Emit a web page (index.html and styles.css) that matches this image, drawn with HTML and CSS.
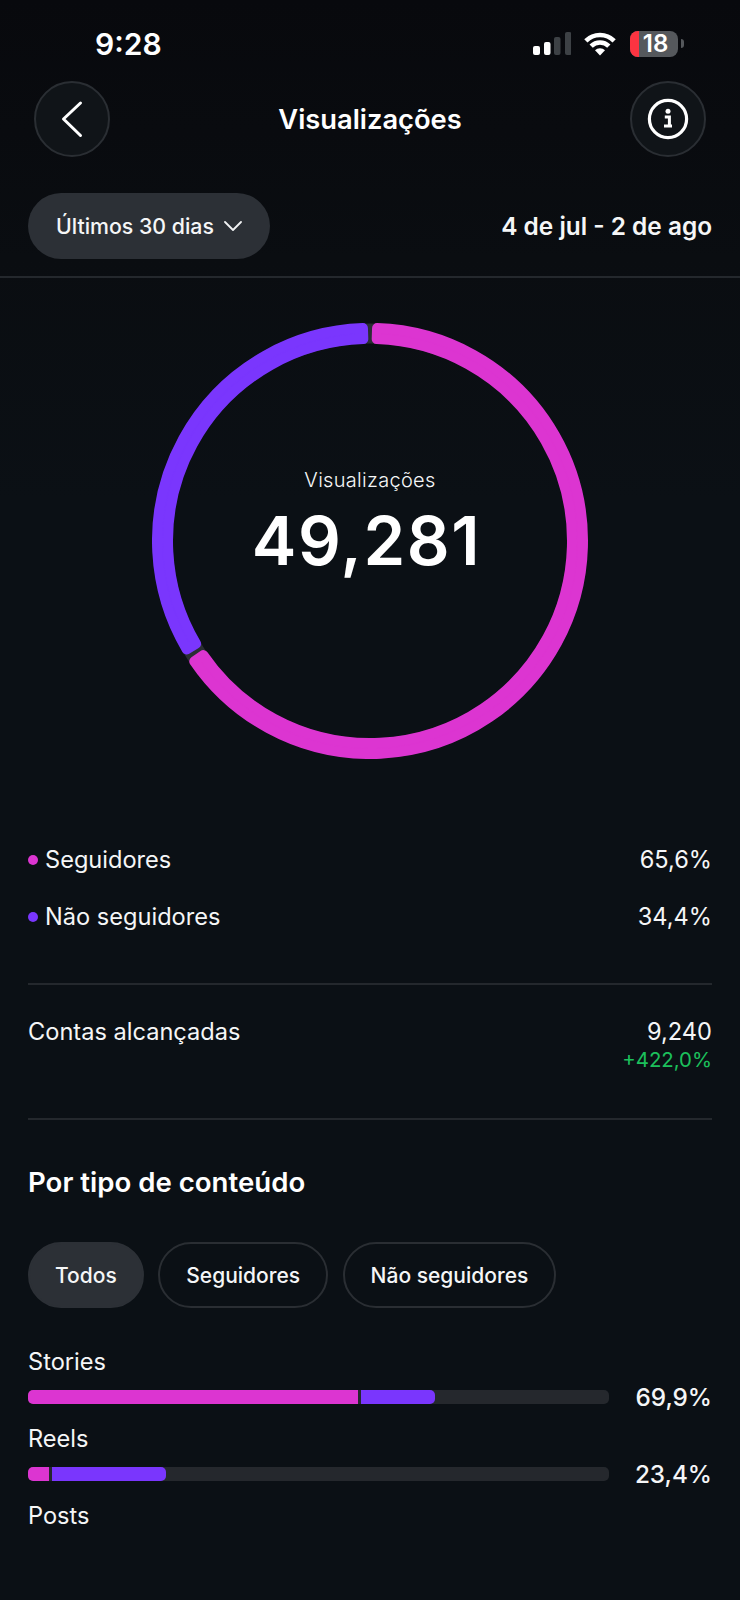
FILE: index.html
```html
<!DOCTYPE html>
<html lang="pt-BR">
<head>
    <meta charset="UTF-8">
    <meta name="viewport" content="width=device-width, initial-scale=1.0">
    <title>Visualizações</title>
    <link rel="stylesheet" href="styles.css">
</head>
<body>
<div class="screen">
    <div class="status-bar">
        <span class="clock">9:28</span>
        <div class="status-icons">
            <svg class="signal" width="38" height="23" viewBox="0 0 38 23">
                <rect x="0" y="14" width="7" height="9" rx="2" fill="#fff"/>
                <rect x="11" y="10" width="6.5" height="13" rx="2" fill="#fff"/>
                <rect x="21" y="5" width="6.5" height="18" rx="2" fill="#3d4145"/>
                <rect x="32" y="0" width="6.5" height="23" rx="2" fill="#3d4145"/>
            </svg>
            <svg class="wifi" width="34" height="24" viewBox="0 0 34 24">
                <path d="M2.86 8.86A20 20 0 0 1 31.14 8.86" fill="none" stroke="#fff" stroke-width="4.6"/>
                <path d="M8.16 14.16A12.5 12.5 0 0 1 25.84 14.16" fill="none" stroke="#fff" stroke-width="4.6"/>
                <path d="M17 23.5L12 18.3A7 7 0 0 1 22 18.3Z" fill="#fff"/>
            </svg>
            <div class="battery">
                <div class="battery-body">
                    <span class="battery-low"></span>
                    <span class="battery-level">18</span>
                </div>
                <span class="battery-nub"></span>
            </div>
        </div>
    </div>

    <div class="nav">
        <div class="round-btn">
            <svg width="24" height="38" viewBox="0 0 24 38">
                <path d="M20.5 3L3.5 19L20.5 35.5" fill="none" stroke="#fff" stroke-width="3" stroke-linecap="round" stroke-linejoin="round"/>
            </svg>
        </div>
        <h1 class="nav-title">Visualizações</h1>
        <div class="round-btn">
            <svg width="42" height="42" viewBox="0 0 42 42">
                <circle cx="21" cy="21" r="18.6" fill="none" stroke="#fff" stroke-width="3.2"/>
                <circle cx="21" cy="13.2" r="2.5" fill="#fff"/>
                <path d="M17.8 19H22.4V28H25M17 28H25" fill="none" stroke="#fff" stroke-width="3"/>
            </svg>
        </div>
    </div>

    <div class="toolbar">
        <div class="range-pill">
            <span>Últimos 30 dias</span>
            <svg width="18" height="10" viewBox="0 0 18 10">
                <path d="M1 1L9 9L17 1" fill="none" stroke="#f1f2f3" stroke-width="1.8" stroke-linecap="round" stroke-linejoin="round"/>
            </svg>
        </div>
        <span class="date-range">4 de jul - 2 de ago</span>
    </div>
    <div class="full-rule"></div>

    <div class="donut">
        <svg width="436" height="436" viewBox="0 0 436 436">
            <circle cx="218" cy="218" r="207.5" fill="none" stroke="#2a2e33" stroke-width="20"/>
            <path class="slice-pink" d="M225.06 5.12A213 213 0 1 1 42.25 338.35L51.33 332.13A202 202 0 1 0 224.70 16.11Z"/>
            <path class="slice-purple" d="M34.67 326.42A213 213 0 0 1 210.94 5.12L211.30 16.11A202 202 0 0 0 44.14 320.82Z"/>
        </svg>
        <div class="donut-center">
            <span class="donut-label">Visualizações</span>
            <span class="donut-value">49,281</span>
        </div>
    </div>

    <div class="legend">
        <div class="row">
            <span class="legend-name"><i class="dot dot-pink"></i>Seguidores</span>
            <span>65,6%</span>
        </div>
        <div class="row">
            <span class="legend-name"><i class="dot dot-purple"></i>Não seguidores</span>
            <span>34,4%</span>
        </div>
    </div>

    <div class="rule rule-first"></div>

    <div class="reach">
        <span>Contas alcançadas</span>
        <div class="reach-values">
            <span>9,240</span>
            <span class="growth">+422,0%</span>
        </div>
    </div>

    <div class="rule rule-second"></div>

    <h2 class="section-title">Por tipo de conteúdo</h2>

    <div class="chips">
        <span class="chip chip-active">Todos</span>
        <span class="chip">Seguidores</span>
        <span class="chip">Não seguidores</span>
    </div>

    <div class="types">
        <div class="type">
            <div class="type-name">Stories</div>
            <div class="type-row">
                <div class="bar">
                    <span class="bar-pink" style="width: 330px"></span>
                    <span class="bar-purple" style="width: 74px"></span>
                </div>
                <span class="type-value">69,9%</span>
            </div>
        </div>
        <div class="type">
            <div class="type-name">Reels</div>
            <div class="type-row">
                <div class="bar">
                    <span class="bar-pink" style="width: 21px"></span>
                    <span class="bar-purple" style="width: 114px"></span>
                </div>
                <span class="type-value">23,4%</span>
            </div>
        </div>
        <div class="type">
            <div class="type-name">Posts</div>
        </div>
    </div>
</div>
</body>
</html>
```

FILE: styles.css
```css
* {
    box-sizing: border-box;
    margin: 0;
    padding: 0;
}

body {
    font-family: 'Inter', sans-serif;
    background-color: #0b1015;
    color: #f5f6f7;
}

.screen {
    width: 740px;
    height: 1600px;
    overflow: hidden;
    background: linear-gradient(#08090d 0, #0a0d11 260px, #0b1015 500px);
}

/* status bar */
.status-bar {
    height: 81px;
    padding: 6px 56px 0 95px;
    display: flex;
    align-items: center;
    justify-content: space-between;
}

.clock {
    font-size: 30px;
    font-weight: 600;
    color: #fff;
}

.status-icons {
    display: flex;
    align-items: center;
}

.signal {
    margin-right: 12px;
}

.wifi {
    margin-right: 13px;
}

.battery {
    display: flex;
    align-items: center;
    gap: 3px;
}

.battery-body {
    position: relative;
    width: 48px;
    height: 26px;
    border-radius: 8px;
    overflow: hidden;
    background-color: #55585c;
    display: flex;
    align-items: center;
    justify-content: center;
}

.battery-low {
    position: absolute;
    left: 0;
    top: 0;
    bottom: 0;
    width: 9px;
    background-color: #fc3441;
}

.battery-level {
    position: relative;
    padding-left: 3px;
    font-size: 24px;
    font-weight: 600;
    color: #fff;
}

.battery-nub {
    width: 3px;
    height: 9px;
    border-radius: 0 3px 3px 0;
    background-color: #55585c;
}

/* header */
.nav {
    height: 75px;
    padding: 0 34px;
    display: flex;
    align-items: center;
    justify-content: space-between;
}

.round-btn {
    width: 76px;
    height: 76px;
    border-radius: 50%;
    border: 2px solid #2a2e33;
    background-color: #101418;
    display: flex;
    align-items: center;
    justify-content: center;
}

.nav-title {
    padding-top: 2px;
    font-size: 27.3px;
    font-weight: 600;
    color: #fff;
}

.toolbar {
    margin-top: 37px;
    padding: 0 28px;
    display: flex;
    align-items: center;
    justify-content: space-between;
}

.range-pill {
    height: 66px;
    width: 242px;
    padding-left: 28px;
    border-radius: 33px;
    background-color: #2c3036;
    display: flex;
    align-items: center;
    gap: 10px;
    font-size: 21.3px;
    font-weight: 500;
}

.date-range {
    font-size: 24.4px;
    font-weight: 600;
}

.full-rule {
    height: 2px;
    margin-top: 17px;
    background-color: #24282d;
}

/* donut */
.donut {
    margin-top: 45px;
    height: 436px;
    display: grid;
    justify-items: center;
    align-items: center;
}

.donut svg,
.donut-center {
    grid-area: 1 / 1;
}

.slice-pink {
    fill: #dc35d1;
    stroke: #dc35d1;
    stroke-width: 10;
    stroke-linejoin: round;
}

.slice-purple {
    fill: #7a36fd;
    stroke: #7a36fd;
    stroke-width: 10;
    stroke-linejoin: round;
}

.donut-center {
    display: flex;
    flex-direction: column;
    align-items: center;
    margin-top: -35px;
}

.donut-label {
    font-size: 20px;
    font-weight: 300;
    letter-spacing: 0.3px;
    line-height: 24px;
}

.donut-value {
    margin-top: 11px;
    margin-right: 7px;
    font-size: 67px;
    font-weight: 600;
    letter-spacing: 1.6px;
    line-height: 76px;
    color: #fff;
}

/* legend */
.legend {
    margin-top: 86px;
    padding: 0 28px;
    display: flex;
    flex-direction: column;
    gap: 27px;
}

.row,
.reach {
    display: flex;
    justify-content: space-between;
    font-size: 23.6px;
    line-height: 30px;
}

.legend-name {
    display: flex;
    align-items: center;
}

.dot {
    width: 10px;
    height: 10px;
    margin-right: 7px;
    border-radius: 50%;
}

.dot-pink {
    background-color: #dc35d1;
}

.dot-purple {
    background-color: #7a36fd;
}

.rule {
    height: 2px;
    margin: 0 28px;
    background-color: #24282d;
}

.rule-first {
    margin-top: 51px;
}

.rule-second {
    margin-top: 45px;
}

.reach {
    margin-top: 32px;
    padding: 0 28px;
}

.reach-values {
    display: flex;
    flex-direction: column;
    align-items: flex-end;
}

.growth {
    font-size: 20.4px;
    line-height: 26px;
    color: #1cc05c;
}

/* by content type */
.section-title {
    margin-top: 45px;
    padding: 0 28px;
    font-size: 27.6px;
    font-weight: 600;
    line-height: 34px;
    color: #fff;
}

.chips {
    margin-top: 43px;
    padding: 0 28px;
    display: flex;
    gap: 14.5px;
}

.chip {
    height: 66px;
    padding: 0 26px;
    border-radius: 33px;
    border: 2px solid #2a2e33;
    display: flex;
    align-items: center;
    font-size: 21px;
    font-weight: 500;
}

.chip-active {
    padding: 0 25px;
    background-color: #2c3036;
    border-color: #2c3036;
}

.types {
    margin-top: 39px;
    padding: 0 28px;
    display: flex;
    flex-direction: column;
    gap: 12px;
}

.type-name {
    font-size: 23.6px;
    line-height: 30px;
}

.type-row {
    margin-top: 5px;
    height: 30px;
    display: flex;
    align-items: center;
    justify-content: space-between;
}

.bar {
    width: 581px;
    height: 14px;
    border-radius: 5px;
    background-color: #25282d;
    display: flex;
    gap: 3px;
}

.bar-pink {
    height: 100%;
    border-radius: 5px 0 0 5px;
    background-color: #dc35d1;
}

.bar-purple {
    height: 100%;
    border-radius: 0 5px 5px 0;
    background-color: #7a36fd;
}

.type-value {
    font-size: 24.3px;
    font-weight: 500;
}
```
